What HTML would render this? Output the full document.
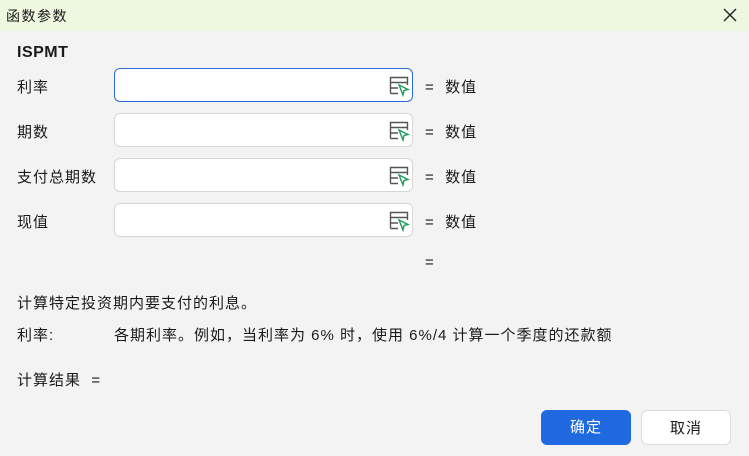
<!DOCTYPE html>
<html><head><meta charset="utf-8"><style>
*{margin:0;padding:0;box-sizing:border-box}
body{width:749px;height:456px;background:#f3f3f3;font-family:"Liberation Sans","Noto Sans CJK SC",sans-serif;font-size:15px;letter-spacing:1px;color:#1a1a1a;position:relative;overflow:hidden}
.title{position:absolute;left:0;top:0;width:749px;height:31px;background:#eef7e0}
.t{position:absolute;white-space:nowrap;line-height:20px;margin-top:1px}
.inp{position:absolute;left:114px;width:299px;height:34px;background:#fff;border:1px solid #d6d6d6;border-radius:6px}
.inp.f{border:1px solid #2a6ad8}
.inp svg{position:absolute;left:273px;top:6px}
.btn{position:absolute;top:410px;width:90px;height:35px;border-radius:6px;text-align:center;line-height:35px;font-size:15px}
</style></head><body>
<div class="title"></div>
<div class="t" style="left:6px;top:5px;font-size:14px;letter-spacing:1.5px">函数参数</div>
<svg style="position:absolute;left:723px;top:8px" width="14" height="14"><path d="M1 1L13 13M13 1L1 13" stroke="#222" stroke-width="1.4"/></svg>
<div class="t" style="left:17px;top:42px;font-weight:bold;font-size:16px;letter-spacing:0.5px">ISPMT</div>

<div class="t" style="left:17px;top:77px">利率</div>
<div class="inp f" style="top:68px"><svg width="22" height="22"><path d="M2.5 18.5V2.5H19.5V10M2.5 7.5H19.5M2.5 13H10M2.5 18.5H10" stroke="#555" stroke-width="1.4" fill="none"/><path d="M11 10L20 14.5L16 15.5L15 20Z" stroke="#1a9a5a" stroke-width="1.4" fill="none"/></svg></div>
<div class="t" style="left:425px;top:77px">=&nbsp;&nbsp;数值</div>

<div class="t" style="left:17px;top:122px">期数</div>
<div class="inp" style="top:113px"><svg width="22" height="22"><path d="M2.5 18.5V2.5H19.5V10M2.5 7.5H19.5M2.5 13H10M2.5 18.5H10" stroke="#555" stroke-width="1.4" fill="none"/><path d="M11 10L20 14.5L16 15.5L15 20Z" stroke="#1a9a5a" stroke-width="1.4" fill="none"/></svg></div>
<div class="t" style="left:425px;top:122px">=&nbsp;&nbsp;数值</div>

<div class="t" style="left:17px;top:167px">支付总期数</div>
<div class="inp" style="top:158px"><svg width="22" height="22"><path d="M2.5 18.5V2.5H19.5V10M2.5 7.5H19.5M2.5 13H10M2.5 18.5H10" stroke="#555" stroke-width="1.4" fill="none"/><path d="M11 10L20 14.5L16 15.5L15 20Z" stroke="#1a9a5a" stroke-width="1.4" fill="none"/></svg></div>
<div class="t" style="left:425px;top:167px">=&nbsp;&nbsp;数值</div>

<div class="t" style="left:17px;top:212px">现值</div>
<div class="inp" style="top:203px"><svg width="22" height="22"><path d="M2.5 18.5V2.5H19.5V10M2.5 7.5H19.5M2.5 13H10M2.5 18.5H10" stroke="#555" stroke-width="1.4" fill="none"/><path d="M11 10L20 14.5L16 15.5L15 20Z" stroke="#1a9a5a" stroke-width="1.4" fill="none"/></svg></div>
<div class="t" style="left:425px;top:212px">=&nbsp;&nbsp;数值</div>

<div class="t" style="left:425px;top:252px">=</div>
<div class="t" style="left:17px;top:293px">计算特定投资期内要支付的利息。</div>
<div class="t" style="left:17px;top:325px">利率:</div>
<div class="t" style="left:114px;top:325px">各期利率。例如，当利率为 6% 时，使用 6%/4 计算一个季度的还款额</div>
<div class="t" style="left:17px;top:370px">计算结果&nbsp;&nbsp;=</div>
<div class="btn" style="left:541px;background:#1f6ae0;color:#fff">确定</div>
<div class="btn" style="left:641px;background:#fff;border:1px solid #dcdcdc">取消</div>
</body></html>
